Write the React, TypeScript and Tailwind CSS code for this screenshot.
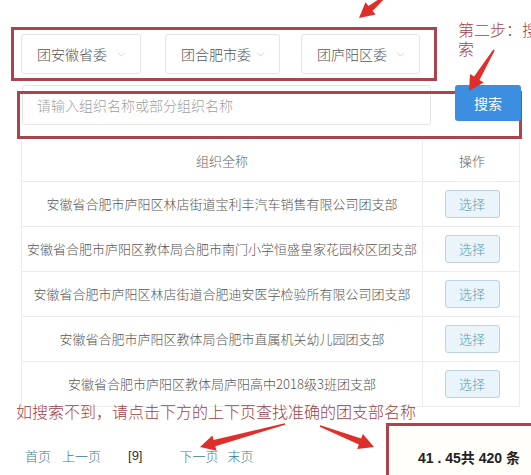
import React from "react";
import { ChevronDown } from "lucide-react";

const rows = [
  "安徽省合肥市庐阳区林店街道宝利丰汽车销售有限公司团支部",
  "安徽省合肥市庐阳区教体局合肥市南门小学恒盛皇家花园校区团支部",
  "安徽省合肥市庐阳区林店街道合肥迪安医学检验所有限公司团支部",
  "安徽省合肥市庐阳区教体局合肥市直属机关幼儿园团支部",
  "安徽省合肥市庐阳区教体局庐阳高中2018级3班团支部",
];

function arrowPoints(x1: number, y1: number, x2: number, y2: number) {
  const dx = x2 - x1;
  const dy = y2 - y1;
  const len = Math.sqrt(dx * dx + dy * dy);
  const ux = dx / len;
  const uy = dy / len;
  const px = -uy;
  const py = ux;
  const headLen = 15;
  const headW = 8;
  const shaftTail = 0.8;
  const shaftHead = 3.2;
  const bx = x2 - ux * headLen;
  const by = y2 - uy * headLen;
  const pts: [number, number][] = [
    [x1 + px * shaftTail, y1 + py * shaftTail],
    [bx + px * shaftHead, by + py * shaftHead],
    [bx + px * headW, by + py * headW],
    [x2, y2],
    [bx - px * headW, by - py * headW],
    [bx - px * shaftHead, by - py * shaftHead],
    [x1 - px * shaftTail, y1 - py * shaftTail],
  ];
  return pts.map((p) => `${p[0].toFixed(1)},${p[1].toFixed(1)}`).join(" ");
}

function Select({ label, w, gap }: { label: string; w: string; gap: string }) {
  return (
    <div
      className={`${w} ${gap} h-[40px] flex items-center justify-between pl-[15px] pr-[12px] border border-[#e4e4e4] rounded-[3px] bg-white text-[14px] text-[#555]`}
    >
      <span>{label}</span>
      <ChevronDown size={13} strokeWidth={1.3} className="text-[#c4c4c4]" />
    </div>
  );
}

export default function App() {
  return (
    <div
      className="relative w-[531px] h-[475px] overflow-hidden bg-white font-light"
      style={{ fontFamily: '"Noto Sans CJK SC", "Noto Sans", sans-serif' }}
    >
      {/* UI content */}
      <div className="pt-[34px]">
        <div className="flex pl-[21px]">
          <Select label="团安徽省委" w="w-[120px]" gap="" />
          <Select label="团合肥市委" w="w-[115px]" gap="ml-[24px]" />
          <Select label="团庐阳区委" w="w-[119px]" gap="ml-[21px]" />
        </div>

        <div className="flex items-start pl-[22px] mt-[11px]">
          <div className="w-[409px] h-[40px] flex items-center pl-[14px] border border-[#e6e6e6] rounded-[3px] text-[14px] text-[#a0a0a0]">
            请输入组织名称或部分组织名称
          </div>
          <button className="relative z-20 ml-[24px] w-[66px] h-[36px] rounded-[3px] bg-[#3c8fe0] text-white text-[14px] font-normal flex items-center justify-center">
            搜索
          </button>
        </div>

        <div className="ml-[21px] mt-[16px] w-[499px] border-l border-r border-[#ececec]">
          <div className="grid grid-cols-[401px_98px] h-[41px] border-b border-[#ececec] text-[13px] text-[#666]">
            <div className="flex items-center justify-center border-r border-[#ececec]">组织全称</div>
            <div className="flex items-center justify-center">操作</div>
          </div>
          {rows.map((r) => (
            <div
              key={r}
              className="grid grid-cols-[401px_98px] h-[45px] border-b border-[#ececec] text-[13px] text-[#555]"
            >
              <div className="flex items-center justify-center border-r border-[#ececec] whitespace-nowrap">
                {r}
              </div>
              <div className="flex items-center justify-center">
                <button className="w-[55px] h-[28px] rounded-[3px] border border-[#bfd2df] bg-[#eaf4fb] text-[13px] text-[#5b9db3] flex items-center justify-center">
                  选择
                </button>
              </div>
            </div>
          ))}
        </div>

        <div className="flex items-center mt-[39px] pl-[25px] text-[13px] text-[#3a7d8c]">
          <span>首页</span>
          <span className="ml-[11px]">上一页</span>
          <span
            className="ml-[27px] text-[#333] font-normal"
            style={{ fontFamily: '"Liberation Sans", sans-serif' }}
          >
            [9]
          </span>
          <span className="ml-[37px]">下一页</span>
          <span className="ml-[9px]">末页</span>
        </div>
      </div>

      {/* Annotation overlays */}
      <div className="absolute left-[11px] top-[27px] w-[426px] h-[54px] border-[3px] border-[#a8454e] z-10" />
      <div className="absolute left-[17px] top-[91px] w-[505px] h-[48px] border-[3px] border-[#a8454e] z-10" />

      <div className="absolute left-[458px] top-[20px] text-[16px] leading-[19px] text-[#a3434c] whitespace-nowrap z-10">
        第二步：搜
        <br />
        索
      </div>

      <div className="absolute left-[16px] top-[401px] text-[16px] leading-[20px] text-[#9f3f49] whitespace-nowrap z-10">
        如搜索不到，请点击下方的上下页查找准确的团支部名称
      </div>

      <div className="absolute left-[386px] top-[423px] w-[160px] h-[70px] border-[3px] border-[#a8454e] bg-[#fffef8] z-10">
        <div
          className="pl-[29px] pt-[22px] text-[14px] font-semibold text-[#222] whitespace-nowrap"
          style={{ fontFamily: '"Liberation Sans", "Noto Sans CJK SC", sans-serif' }}
        >
          41 . 45共 420 条
        </div>
      </div>

      <svg className="absolute inset-0 z-30 pointer-events-none" width="531" height="475">
        <polygon points={arrowPoints(388, -6, 359, 18)} fill="#df2f2a" />
        <polygon points={arrowPoints(494, 50, 469, 91)} fill="#df2f2a" />
        <polygon points={arrowPoints(285, 424, 200, 447)} fill="#df2f2a" />
        <polygon points={arrowPoints(320, 426, 374, 447)} fill="#df2f2a" />
      </svg>
    </div>
  );
}
